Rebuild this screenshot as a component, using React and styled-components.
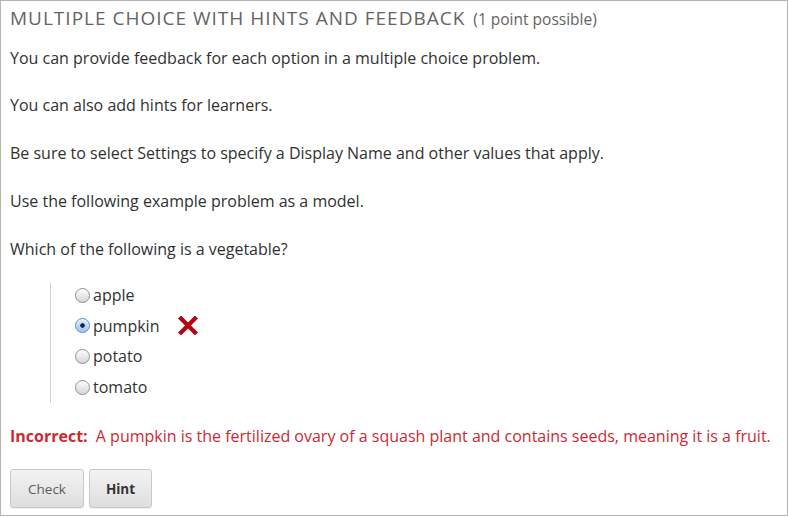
import React from "react";
import styled, { createGlobalStyle } from "styled-components";

const Global = createGlobalStyle`
  html, body { margin: 0; padding: 0; background: #fff; }
  body { font-family: "Open Sans", "Noto Sans", sans-serif; }
`;

const Frame = styled.div`
  box-sizing: border-box;
  width: 788px;
  height: 516px;
  border: 1px solid #b4b4b4;
  padding: 5px 9px 0;
  color: #313131;
`;

const Title = styled.h2`
  margin: 0;
  font-weight: 400;
  font-size: 19px;
  line-height: 24px;
  letter-spacing: 1px;
  text-transform: uppercase;
  color: #646464;
`;

const Points = styled.span`
  font-size: 15.5px;
  letter-spacing: 0;
  text-transform: none;
  margin-left: 8px;
  color: #646464;
`;

const Body = styled.div`
  margin-top: 14.5px;
  display: flex;
  flex-direction: column;
  gap: 23.75px;
`;

const Para = styled.p`
  margin: 0;
  font-size: 16px;
  line-height: 24px;
`;

const Choices = styled.fieldset`
  margin: 22.5px 0 0 40px;
  padding: 0 0 4px 24px;
  border: none;
  border-left: 1px solid #d4d4d4;
  display: flex;
  flex-direction: column;
  gap: 6.7px;
`;

const Choice = styled.label`
  display: flex;
  align-items: center;
  height: 24px;
  font-size: 16px;
  color: #313131;
`;

const Radio = styled.span`
  box-sizing: border-box;
  width: 15px;
  height: 15px;
  border-radius: 50%;
  margin-right: 3px;
  border: 1px solid ${(p) => (p.$checked ? "#5c8fc7" : "#8e8e8e")};
  background: ${(p) =>
    p.$checked
      ? "radial-gradient(circle at 50% 50%, #1b2a3a 0 2px, transparent 2.5px), linear-gradient(#dbeaff, #9cc4f2)"
      : "linear-gradient(#fdfdfd, #d6d6d6)"};
  box-shadow: inset 0 1px 1px rgba(255,255,255,0.8);
  flex: none;
`;

const Mark = styled.svg`
  margin-left: 19px;
  width: 20px;
  height: 19px;
  flex: none;
`;

const Feedback = styled.p`
  margin: 21px 0 0;
  font-size: 16px;
  line-height: 24px;
  color: #cb2a33;
`;

const Strong = styled.strong`
  font-weight: 700;
  margin-right: 4px;
`;

const Actions = styled.div`
  margin-top: 21px;
  display: flex;
  gap: 5px;
`;

const Button = styled.button`
  box-sizing: border-box;
  height: 39px;
  width: ${(p) => p.$w}px;
  border: 1px solid #c8c8c8;
  border-radius: 3px;
  background: linear-gradient(#f3f3f3, #dedede);
  font-family: "Open Sans", "Noto Sans", sans-serif;
  font-size: 13.5px;
  font-weight: ${(p) => (p.$bold ? 700 : 400)};
  color: ${(p) => (p.$bold ? "#333" : "#5b5b5b")};
  padding: 0;
  box-shadow: 0 1px 0 rgba(0,0,0,0.05);
`;

const options = ["apple", "pumpkin", "potato", "tomato"];

export default function App() {
  return (
    <>
      <Global />
      <Frame>
        <Title>
          Multiple Choice with Hints and Feedback
          <Points>(1 point possible)</Points>
        </Title>
        <Body>
          <Para>You can provide feedback for each option in a multiple choice problem.</Para>
          <Para>You can also add hints for learners.</Para>
          <Para>Be sure to select Settings to specify a Display Name and other values that apply.</Para>
          <Para>Use the following example problem as a model.</Para>
          <Para>Which of the following is a vegetable?</Para>
        </Body>
        <Choices>
          {options.map((o) => (
            <Choice key={o}>
              <Radio $checked={o === "pumpkin"} />
              {o}
              {o === "pumpkin" && (
                <Mark viewBox="0 0 20 19">
                  <path d="M3 2.5 L17 16.5 M17 2.5 L3 16.5" stroke="#b20610" strokeWidth="4.2" strokeLinecap="square" />
                </Mark>
              )}
            </Choice>
          ))}
        </Choices>
        <Feedback>
          <Strong>Incorrect:</Strong> A pumpkin is the fertilized ovary of a squash plant and contains seeds, meaning it is a fruit.
        </Feedback>
        <Actions>
          <Button $w={74}>Check</Button>
          <Button $w={63} $bold>Hint</Button>
        </Actions>
      </Frame>
    </>
  );
}
